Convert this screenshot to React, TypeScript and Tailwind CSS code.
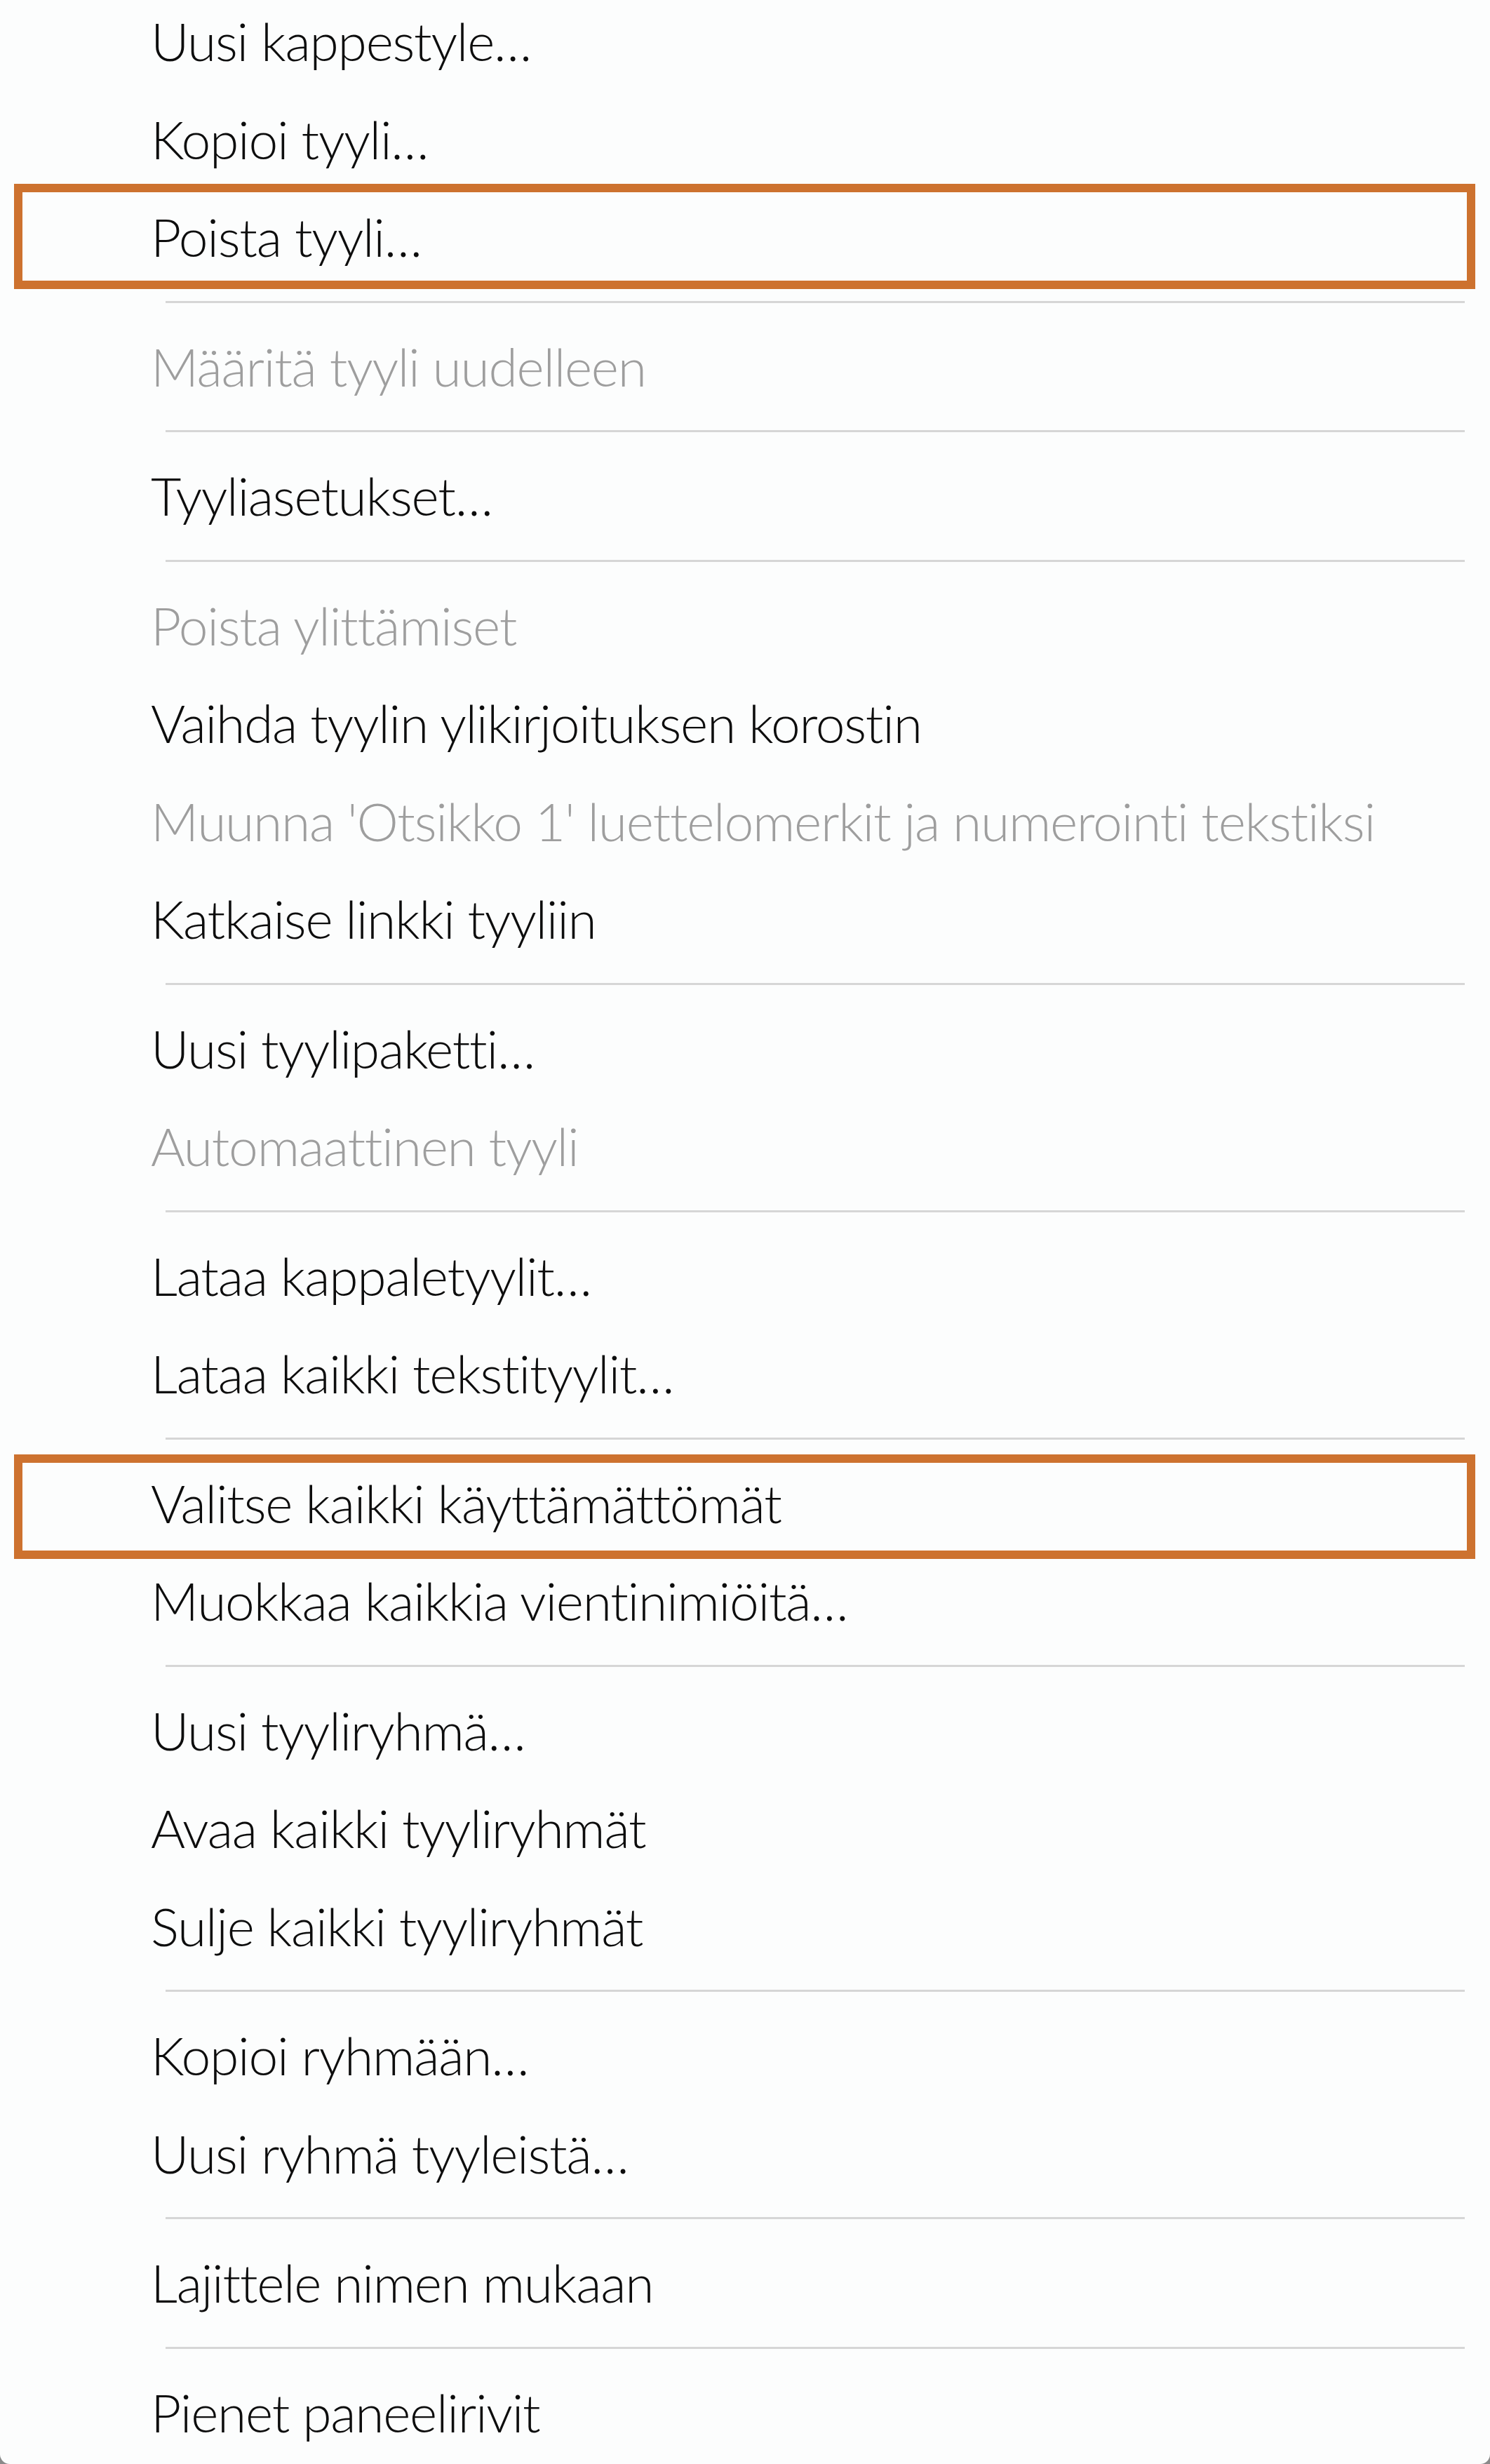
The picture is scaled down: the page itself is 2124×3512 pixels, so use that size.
import React from 'react';

type Item =
  | { kind: 'item'; label: string; disabled?: boolean; box?: 'a' | 'b' }
  | { kind: 'sep' };

const items: Item[] = [
  { kind: 'item', label: 'Uusi kappestyle…' },
  { kind: 'item', label: 'Kopioi tyyli…' },
  { kind: 'item', label: 'Poista tyyli…', box: 'a' },
  { kind: 'sep' },
  { kind: 'item', label: 'Määritä tyyli uudelleen', disabled: true },
  { kind: 'sep' },
  { kind: 'item', label: 'Tyyliasetukset…' },
  { kind: 'sep' },
  { kind: 'item', label: 'Poista ylittämiset', disabled: true },
  { kind: 'item', label: 'Vaihda tyylin ylikirjoituksen korostin' },
  { kind: 'item', label: "Muunna 'Otsikko 1' luettelomerkit ja numerointi tekstiksi", disabled: true },
  { kind: 'item', label: 'Katkaise linkki tyyliin' },
  { kind: 'sep' },
  { kind: 'item', label: 'Uusi tyylipaketti…' },
  { kind: 'item', label: 'Automaattinen tyyli', disabled: true },
  { kind: 'sep' },
  { kind: 'item', label: 'Lataa kappaletyylit…' },
  { kind: 'item', label: 'Lataa kaikki tekstityylit…' },
  { kind: 'sep' },
  { kind: 'item', label: 'Valitse kaikki käyttämättömät', box: 'b' },
  { kind: 'item', label: 'Muokkaa kaikkia vientinimiöitä…' },
  { kind: 'sep' },
  { kind: 'item', label: 'Uusi tyyliryhmä…' },
  { kind: 'item', label: 'Avaa kaikki tyyliryhmät' },
  { kind: 'item', label: 'Sulje kaikki tyyliryhmät' },
  { kind: 'sep' },
  { kind: 'item', label: 'Kopioi ryhmään…' },
  { kind: 'item', label: 'Uusi ryhmä tyyleistä…' },
  { kind: 'sep' },
  { kind: 'item', label: 'Lajittele nimen mukaan' },
  { kind: 'sep' },
  { kind: 'item', label: 'Pienet paneelirivit' },
];

const App: React.FC = () => {
  return (
    <div className="w-[2124px] h-[3512px] bg-[#8a8a8a] overflow-hidden">
      <div className="h-full bg-[#fcfdfd] rounded-b-[14px] overflow-hidden font-['Lato','Liberation_Sans',sans-serif] font-light">
        <ul className="-mt-[11px]">
          {items.map((it, i) =>
            it.kind === 'sep' ? (
              <li key={i} className="h-[45px] flex items-center">
                <div className="ml-[236px] mr-[36px] h-[3px] flex-1 bg-[#d6d6d6]" />
              </li>
            ) : (
              <li
                key={i}
                className={`relative h-[139.5px] pl-[215px] text-[75px] leading-[139.5px] tracking-[-0.017em] whitespace-nowrap ${
                  it.disabled ? 'text-[#9e9e9e]' : 'text-[#0d0d0d]'
                }`}
              >
                {it.label}
                {/* orange callout boxes drawn over the menu */}
                {it.box === 'a' && (
                  <div className="absolute left-[20px] right-[21px] -top-[6px] -bottom-[4px] border-[12px] border-[#cd722f] pointer-events-none" />
                )}
                {it.box === 'b' && (
                  <div className="absolute left-[20px] right-[21px] top-0 -bottom-[10px] border-[12px] border-[#cd722f] pointer-events-none" />
                )}
              </li>
            )
          )}
        </ul>
      </div>
    </div>
  );
};

export default App;
